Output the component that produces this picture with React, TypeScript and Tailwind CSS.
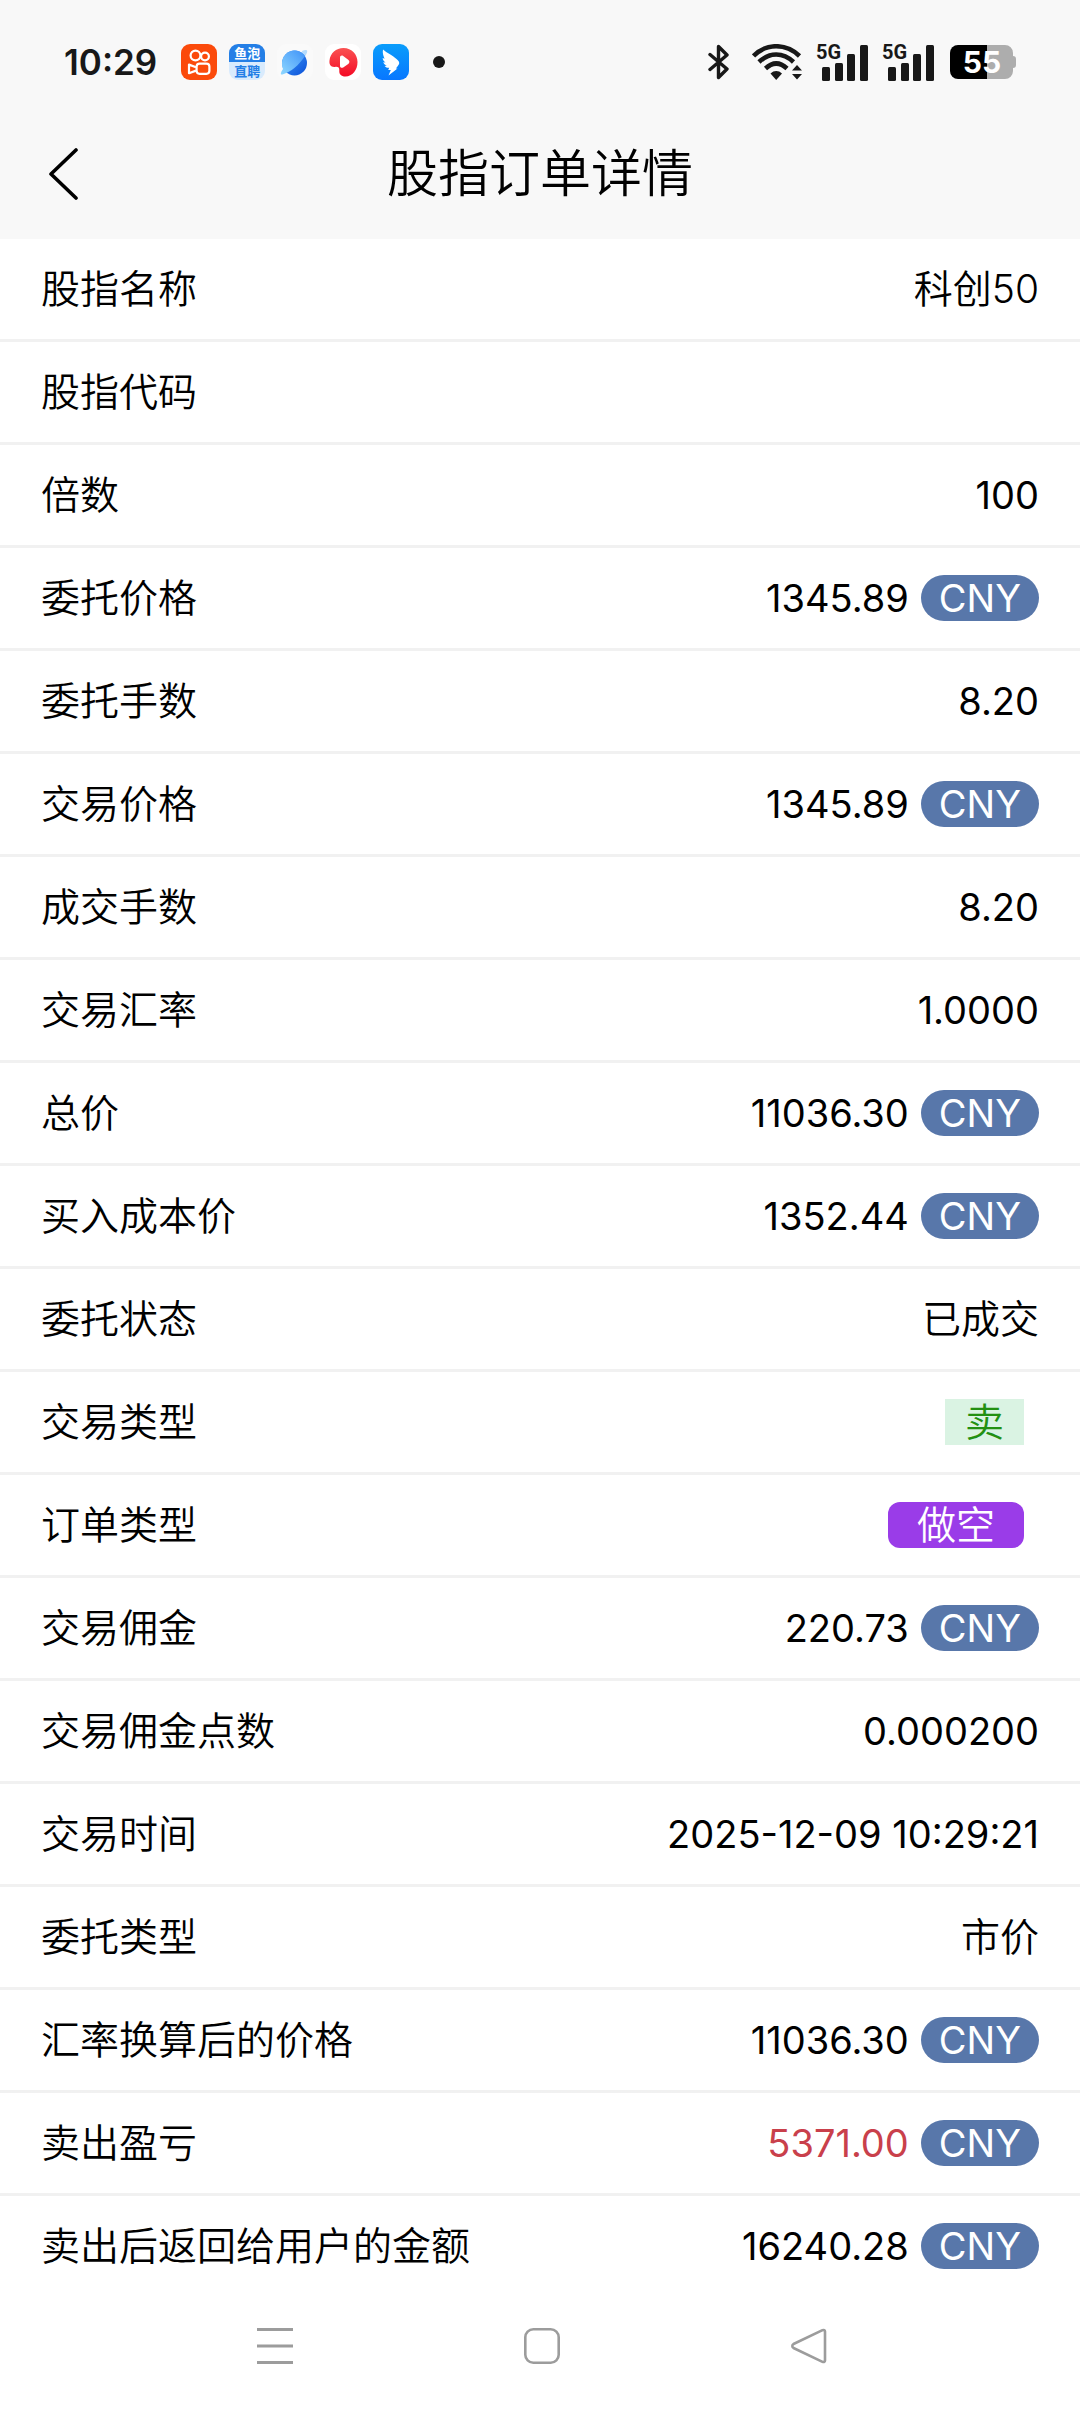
import React from "react";

type Row = {
  label: string;
  value?: string;
  currency?: string;
  tone?: "loss";
  tag?: "sell" | "short";
};

const rows: Row[] = [
  { label: "股指名称", value: "科创50" },
  { label: "股指代码" },
  { label: "倍数", value: "100" },
  { label: "委托价格", value: "1345.89", currency: "CNY" },
  { label: "委托手数", value: "8.20" },
  { label: "交易价格", value: "1345.89", currency: "CNY" },
  { label: "成交手数", value: "8.20" },
  { label: "交易汇率", value: "1.0000" },
  { label: "总价", value: "11036.30", currency: "CNY" },
  { label: "买入成本价", value: "1352.44", currency: "CNY" },
  { label: "委托状态", value: "已成交" },
  { label: "交易类型", value: "卖", tag: "sell" },
  { label: "订单类型", value: "做空", tag: "short" },
  { label: "交易佣金", value: "220.73", currency: "CNY" },
  { label: "交易佣金点数", value: "0.000200" },
  { label: "交易时间", value: "2025-12-09 10:29:21" },
  { label: "委托类型", value: "市价" },
  { label: "汇率换算后的价格", value: "11036.30", currency: "CNY" },
  { label: "卖出盈亏", value: "5371.00", currency: "CNY", tone: "loss" },
  { label: "卖出后返回给用户的金额", value: "16240.28", currency: "CNY" },
];

function KuaishouIcon() {
  return (
    <svg className="size-9" viewBox="0 0 36 36" fill="none" aria-hidden="true">
      <rect width="36" height="36" rx="9" fill="#fb4a0b" />
      <g stroke="#fff" strokeWidth="2.2">
        <circle cx="14.5" cy="11.5" r="4.9" />
        <circle cx="24" cy="12.5" r="3.9" />
        <rect x="15.6" y="19.6" width="12.8" height="10.2" rx="3" />
        <path d="M15 23.2 8 20.6v8.6l7-2.6" strokeLinejoin="round" />
      </g>
    </svg>
  );
}

function YupaoIcon() {
  return (
    <span className="flex size-9 flex-col overflow-hidden rounded-[9px] text-center text-[13px] leading-[18px] font-bold">
      <span className="bg-[#247fe6] text-white">鱼泡</span>
      <span className="bg-[#d9ebfd] text-[#247fe6]">直聘</span>
    </span>
  );
}

function PlanetIcon() {
  return (
    <svg className="size-9" viewBox="0 0 36 36" aria-hidden="true">
      <defs>
        <linearGradient id="planet" x1="0" y1="0" x2="1" y2="1">
          <stop offset="0" stopColor="#45a2fb" />
          <stop offset="1" stopColor="#0a4fd8" />
        </linearGradient>
        <linearGradient id="planetLight" x1="1" y1="0" x2="0" y2="1">
          <stop offset="0" stopColor="#3f92f8" />
          <stop offset="1" stopColor="#8fd8ff" />
        </linearGradient>
      </defs>
      <rect width="36" height="36" rx="9" fill="#fafafa" />
      <path d="M25 7c3-1.2 5-1.2 5.2.1C30.5 9 28.5 12 26 15z" fill="#b5dcfd" />
      <circle cx="17.5" cy="19" r="12.5" fill="url(#planet)" />
      <path d="M28 12C22 21 14 28 5.500 30.500c-2.500.5-2-2 .5-5.500C2 14 11 5 20 6.800c3.500.7 6.500 2.600 8 5.200z" fill="url(#planetLight)" />
    </svg>
  );
}

function RedPlayIcon() {
  return (
    <svg className="size-9" viewBox="0 0 36 36" aria-hidden="true">
      <defs>
        <linearGradient id="redPlay" x1="0" y1="0" x2="0" y2="1">
          <stop offset="0" stopColor="#fa5252" />
          <stop offset="1" stopColor="#f40b26" />
        </linearGradient>
      </defs>
      <rect width="36" height="36" rx="9" fill="#fff" />
      <path d="M18.5 4C27 4 32.500 10.500 32.500 18c0 8-5 14.500-12 14.500-4.500 0-6.500-2.500-6.200-6 .2-3-1.300-4-4.300-3.600-4 .4-6-2-5.500-6.400C5.300 9 11 4 18.500 4z" fill="url(#redPlay)" />
      <path d="M15 13.800c0-2 1.600-2.800 3.200-1.800l5 3.700c1.600 1.200 1.600 3 0 4.200l-5 3.500c-1.600 1-3.200.2-3.200-1.700z" fill="#fff" />
    </svg>
  );
}

function WingIcon() {
  return (
    <svg className="size-9" viewBox="0 0 36 36" aria-hidden="true">
      <defs>
        <linearGradient id="wing" x1="0" y1="0" x2="0" y2="1">
          <stop offset="0" stopColor="#0a9dfb" />
          <stop offset="1" stopColor="#0877ff" />
        </linearGradient>
      </defs>
      <rect width="36" height="36" rx="9" fill="url(#wing)" />
      <path d="M10 5.500c4 3.500 9 5.500 13.500 9.500 2 1.800 3 3 2.700 4.500-.2 1.300-2 3.200-3.400 5h1.700l-9 7 2.300-5.500h-2.600l1-2.200c-1.900.1-3.500-.6-4.600-1.900l2.200-.4c-1.900-.6-3-1.800-3.600-3.300l2.300.2c-1.800-1.200-2.700-2.700-2.900-4.400l2 .7C10.300 11.800 9.300 9 10 5.500z" fill="#fff" />
    </svg>
  );
}

function BluetoothIcon() {
  return (
    <svg className="h-9 w-[22px]" viewBox="0 0 22 36" fill="none" aria-label="蓝牙">
      <path d="M2 10.500 19 25 10.500 33.500V2.500L19 11 2 25.500" stroke="#181818" strokeWidth="3.400" strokeLinejoin="round" strokeLinecap="round" />
    </svg>
  );
}

function WifiIcon() {
  return (
    <svg className="h-9 w-[50px]" viewBox="0 0 50 36" fill="none" aria-label="无线网络">
      <g stroke="#181818" strokeWidth="4.600">
        <path d="M1.500 12C14-1 34-1 47.500 12" />
        <path d="M7 18C17.500 8 31 8 41.500 18" />
        <path d="M13.500 24.500C20.500 18 28 18 35 24.500" />
      </g>
      <path d="M18.500 29.500c3.500-3.300 8-3.300 11.500 0l-5.800 6.500z" fill="#181818" />
      <path d="M40 26.500 45 21l5 5.500zM40 30h10l-5 5.500z" fill="#181818" />
    </svg>
  );
}

function SignalIcon() {
  return (
    <svg className="h-[50px] w-[52px]" viewBox="0 -6 52 50" aria-label="5G 信号">
      <text x="0" y="16" fontFamily="Roboto, sans-serif" fontSize="20" fontWeight="700" fill="#181818">
        5G
      </text>
      <g fill="#181818">
        <rect x="6" y="24" width="8" height="14" rx="1.500" />
        <rect x="19" y="20" width="8" height="18" rx="1.500" />
        <rect x="31" y="11" width="8" height="27" rx="1.500" />
        <rect x="44" y="2" width="8" height="36" rx="1.500" />
      </g>
    </svg>
  );
}

function BatteryIcon() {
  return (
    <svg className="h-[34px] w-[66px]" viewBox="0 0 66 34" aria-label="电量 55%">
      <path d="M37 0H55a8 8 0 0 1 8 8v3c2 0 3 1 3 3v6c0 2-1 3-3 3v3a8 8 0 0 1-8 8H37z" fill="#adadad" />
      <path d="M37 0H8a8 8 0 0 0-8 8v18a8 8 0 0 0 8 8h29z" fill="#000" />
      <text x="32" y="28" textAnchor="middle" fontFamily="Inter, sans-serif" fontSize="30" fontWeight="700" fill="#fff">
        55
      </text>
    </svg>
  );
}

function StatusBar() {
  return (
    <div className="flex h-[124px] items-center justify-between px-16">
      <div className="flex items-center gap-3">
        <time className="mr-3 text-[35px] leading-[44px] font-semibold text-[#181818]">10:29</time>
        <KuaishouIcon />
        <YupaoIcon />
        <PlanetIcon />
        <RedPlayIcon />
        <WingIcon />
        <span className="ml-3 size-3 rounded-full bg-[#181818]" />
      </div>
      <div className="flex items-center">
        <BluetoothIcon />
        <span className="ml-[22px] flex">
          <WifiIcon />
        </span>
        <span className="ml-3.5 flex gap-3.5">
          <SignalIcon />
          <SignalIcon />
        </span>
        <span className="ml-4 flex">
          <BatteryIcon />
        </span>
      </div>
    </div>
  );
}

const isNumeric = (text = "") => /^[\d.:\- ]+$/.test(text);

function Value({ row }: { row: Row }) {
  if (row.tag === "sell") {
    return <span className="mr-[15px] bg-[#daf3e3] px-5 text-[#239012]">{row.value}</span>;
  }
  if (row.tag === "short") {
    return <span className="mr-[15px] rounded-xl bg-[#9a3ce8] px-[29px] text-white">{row.value}</span>;
  }
  const size = isNumeric(row.value) ? "text-[38px] font-normal" : "";
  const color = row.tone === "loss" ? "text-[#c9404b]" : "";
  return (
    <>
      <span className={`${size} ${color}`}>{row.value}</span>
      {row.currency && (
        <span className="rounded-full bg-[#5877aa] px-[18px] text-[38px] font-normal text-white">{row.currency}</span>
      )}
    </>
  );
}

export default function App() {
  return (
    <div className="flex min-h-screen flex-col bg-white font-['Inter','Noto_Sans_CJK_SC',sans-serif] font-[350] text-black">
      <header className="bg-[#f8f8f8]">
        <StatusBar />
        <div className="grid h-[115px] grid-cols-[1fr_auto_1fr] items-start px-11">
          <button type="button" aria-label="返回" className="flex w-10 pt-6">
            <svg className="h-[52px] w-10" viewBox="0 0 40 52" fill="none" aria-hidden="true">
              <path d="M32 2 7 26l25 24" stroke="#000" strokeWidth="3.600" strokeLinecap="round" strokeLinejoin="round" />
            </svg>
          </button>
          <h1 className="pt-3.5 text-[51px] leading-[72px]">股指订单详情</h1>
        </div>
      </header>

      <main>
        <dl className="divide-y-[3px] divide-[#f1f1f1] text-[39px] leading-[46px]">
          {rows.map((row) => (
            <div key={row.label} className="flex h-[103px] items-center justify-between px-[41px] last:h-[100px]">
              <dt>{row.label}</dt>
              <dd className="flex items-center gap-3">
                <Value row={row} />
              </dd>
            </div>
          ))}
        </dl>
      </main>

      <nav className="mt-auto grid h-[116px] grid-cols-3 items-start justify-items-center pt-8 pr-[138px] pl-[142px]">
        <button type="button" aria-label="最近任务">
          <svg className="size-9" viewBox="0 0 36 36" fill="none" stroke="#9c9c9c" strokeWidth="3" aria-hidden="true">
            <path d="M0 1.500h36M0 18h36M0 34.500h36" />
          </svg>
        </button>
        <button type="button" aria-label="主屏幕">
          <svg className="size-9" viewBox="0 0 36 36" fill="none" stroke="#9c9c9c" strokeWidth="2.600" aria-hidden="true">
            <rect x="1.300" y="1.300" width="33.400" height="33.400" rx="8" />
          </svg>
        </button>
        <button type="button" aria-label="返回上一级">
          <svg className="size-9" viewBox="0 0 36 36" fill="none" stroke="#9c9c9c" strokeWidth="2.600" strokeLinejoin="round" aria-hidden="true">
            <path d="M31.500 2.200 2.500 16c-1.600 1-1.600 3 0 4l29 13.800c1.400.6 2.500 0 2.500-1.300v-29c0-1.300-1.100-1.900-2.500-1.300z" />
          </svg>
        </button>
      </nav>
    </div>
  );
}
